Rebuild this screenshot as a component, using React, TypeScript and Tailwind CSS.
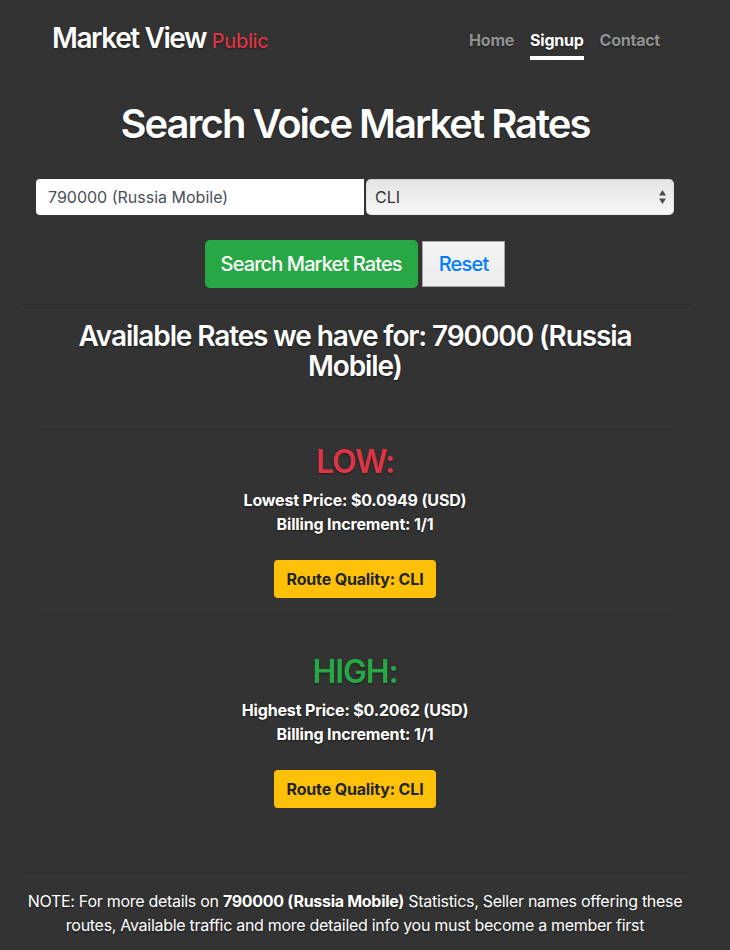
import { useState } from 'react';

const QUALITY_OPTIONS = ['CLI', 'Non-CLI', 'TDM', 'Premium'];

type RateBlockProps = {
  label: string;
  tone: 'low' | 'high';
  priceLabel: string;
  price: string;
  increment: string;
  quality: string;
  first?: boolean;
};

const RateBlock = ({ label, tone, priceLabel, price, increment, quality, first }: RateBlockProps) => (
  <div className="flex flex-col items-center">
    <h2
      className={
        (first ? 'mt-[13px] ' : 'mt-[38px] ') +
        'text-[32px] leading-[38px] font-semibold tracking-[-0.035em] ' +
        (tone === 'low' ? 'text-[#dc3545]' : 'text-[#28a745]')
      }
    >
      {label}
    </h2>
    <p className="mt-[7px] text-[16px] leading-6 font-bold tracking-[-0.01em] text-white">
      {priceLabel}: {price} (USD)
    </p>
    <p className="text-[16px] leading-6 font-bold tracking-[-0.01em] text-white">Billing Increment: {increment}</p>
    <button
      type="button"
      className="mt-6 h-[38px] rounded-[4px] bg-[#ffc107] px-[13px] text-[16px] font-bold tracking-[-0.01em] text-[#212529] [text-shadow:none]"
    >
      Route Quality: {quality}
    </button>
  </div>
);

export default function App() {
  const [code, setCode] = useState('790000 (Russia Mobile)');
  const [quality, setQuality] = useState('CLI');

  return (
    <div className="min-h-[950px] w-full bg-[#333333] font-['Inter',sans-serif] text-white [text-shadow:0_1px_2px_rgba(0,0,0,0.5)]">
      <div className="ml-[19px] w-[672px]">
        {/* masthead */}
        <header className="flex items-start justify-between pl-[33px] pr-[31px] pt-[21px]">
          <h3 className="text-[28px] leading-[34px] font-semibold tracking-[-0.05em]">
            Market View{' '}
            <span className="text-[20px] font-medium tracking-[-0.02em] text-[#dc3545]">Public</span>
          </h3>
          <nav className="mt-[3px] flex gap-4">
            {['Home', 'Signup', 'Contact'].map((item) => (
              <a
                key={item}
                href="#"
                className={
                  'border-b-4 py-1 text-[16px] leading-6 font-bold tracking-[-0.015em] ' +
                  (item === 'Signup' ? 'border-white text-white' : 'border-transparent text-white/50')
                }
              >
                {item}
              </a>
            ))}
          </nav>
        </header>

        <main className="px-[17px]">
          <h1 className="mt-[40px] text-center text-[40px] leading-[48px] font-semibold tracking-[-0.05em]">
            Search Voice Market Rates
          </h1>

          <form className="mt-[31px]" onSubmit={(event) => event.preventDefault()}>
            <div className="flex h-[36px] gap-[2px]">
              <input
                type="text"
                value={code}
                onChange={(event) => setCode(event.target.value)}
                className="h-full w-[328px] rounded-l-[4px] bg-white px-3 text-[16px] text-[#495057] outline-none [text-shadow:none]"
              />
              <div className="relative h-full flex-1">
                <select
                  value={quality}
                  onChange={(event) => setQuality(event.target.value)}
                  className="h-full w-full appearance-none rounded-[5px] bg-gradient-to-b from-[#e4e4e4] to-[#f7f7f7] pl-[9px] text-[16px] text-[#333] shadow-[inset_0_0_0_1px_rgba(0,0,0,0.06)] outline-none [text-shadow:none]"
                >
                  {QUALITY_OPTIONS.map((option) => (
                    <option key={option} value={option}>
                      {option}
                    </option>
                  ))}
                </select>
                <svg
                  className="pointer-events-none absolute right-[8px] top-[11px]"
                  width="7"
                  height="14"
                  viewBox="0 0 7 14"
                >
                  <path d="M3.5 0 L7 5.5 H0 Z" fill="#4a4a4a" />
                  <path d="M0 8.5 H7 L3.5 14 Z" fill="#4a4a4a" />
                </svg>
              </div>
            </div>

            <div className="mt-[25px] flex items-center justify-center gap-1">
              <button
                type="submit"
                className="h-[48px] rounded-[5px] bg-[#28a745] px-4 text-[20px] font-medium tracking-[-0.045em] text-white [text-shadow:none]"
              >
                Search Market Rates
              </button>
              <button
                type="button"
                className="h-[46px] border border-[#a6a6a6] bg-gradient-to-b from-[#f4f4f4] to-[#ececec] px-[16px] text-[20px] font-medium tracking-[-0.04em] text-[#007bff] [text-shadow:none]"
              >
                Reset
              </button>
            </div>
          </form>
        </main>

        <hr className="mt-4 border-t border-[#2b2b2b]" />

        <div className="px-[17px]">
          <h3 className="mx-auto mt-4 w-[600px] text-center text-[28px] leading-[30px] font-semibold tracking-[-0.04em]">
            Available Rates we have for: 790000 (Russia Mobile)
          </h3>

          <hr className="mt-12 border-t border-[#2e2e2e]" />
          <RateBlock
            first
            label="LOW:"
            tone="low"
            priceLabel="Lowest Price"
            price="$0.0949"
            increment="1/1"
            quality="CLI"
          />
          <hr className="mt-4 border-t border-[#2e2e2e]" />
          <RateBlock
            label="HIGH:"
            tone="high"
            priceLabel="Highest Price"
            price="$0.2062"
            increment="1/1"
            quality="CLI"
          />
        </div>

        <hr className="mt-16 border-t border-[#2e2e2e]" />
        <p className="mt-4 text-center text-[16px] leading-6 tracking-[-0.018em]">
          NOTE: For more details on <b>790000 (Russia Mobile)</b> Statistics, Seller names offering these routes,
          Available traffic and more detailed info you must become a member first
        </p>
      </div>
    </div>
  );
}
